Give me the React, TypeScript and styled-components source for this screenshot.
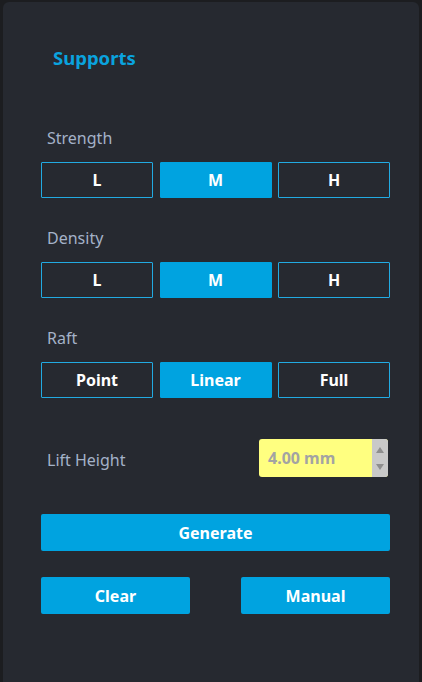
import styled, { createGlobalStyle } from 'styled-components';

const GlobalStyle = createGlobalStyle`
  html, body {
    margin: 0;
    padding: 0;
    background: #1c1d20;
    height: 100%;
    overflow: hidden;
  }
  body {
    font-family: "Noto Sans", "Open Sans", sans-serif;
  }
`;

const Panel = styled.div`
  margin: 2px 3px 0 3px;
  height: 700px;
  box-sizing: border-box;
  background: #262930;
  border-radius: 6px 6px 0 0;
  padding: 42px 29px 0 38px;
  display: flex;
  flex-direction: column;
`;

const Title = styled.h2`
  margin: 0 0 55px 12px;
  font-size: 18.5px;
  line-height: 28px;
  font-weight: 700;
  color: #0aa3de;
`;

const Section = styled.div<{ $last?: boolean }>`
  display: flex;
  flex-direction: column;
  margin-bottom: ${(p) => (p.$last ? '0' : '29px')};
`;

const Label = styled.div`
  margin-left: 6px;
  font-size: 16px;
  line-height: 22px;
  color: #a4b2c8;
  margin-bottom: 13px;
`;

const ButtonRow = styled.div`
  display: grid;
  grid-template-columns: 112px 112px 112px;
  justify-content: space-between;
`;

const Choice = styled.button<{ $active?: boolean }>`
  height: 36px;
  box-sizing: border-box;
  border: 1px solid ${(p) => (p.$active ? '#00a3e0' : '#22aae2')};
  border-radius: 1px;
  background: ${(p) => (p.$active ? '#00a3e0' : '#262930')};
  color: #ffffff;
  font-family: inherit;
  font-size: 16px;
  font-weight: 700;
  padding: 0;
`;

const FieldRow = styled.div`
  display: flex;
  align-items: center;
  justify-content: space-between;
  margin-top: 41px;
  margin-bottom: 37px;
`;

const FieldLabel = styled(Label)`
  margin-bottom: 0;
  margin-top: 4px;
`;

const Spin = styled.div`
  display: flex;
  width: 129px;
  height: 38px;
  margin-right: 2px;
  border-radius: 3px;
  overflow: hidden;
  background: #ffff80;
`;

const SpinInput = styled.div`
  flex: 1;
  display: flex;
  align-items: center;
  padding-left: 9px;
  font-size: 16px;
  font-weight: 700;
  color: #a3a3a3;
`;

const SpinArrows = styled.div`
  width: 16px;
  background: #c9c9c9;
  display: flex;
  flex-direction: column;
  align-items: center;
  justify-content: space-around;
  padding: 2px 0;
  box-sizing: border-box;
`;

const Action = styled.button<{ $wide?: boolean }>`
  height: 37px;
  width: ${(p) => (p.$wide ? '349px' : '149px')};
  box-sizing: border-box;
  border: none;
  border-radius: 2px;
  background: #00a3e0;
  color: #ffffff;
  font-family: inherit;
  font-size: 16px;
  font-weight: 700;
  padding: 0;
`;

const ActionRow = styled.div`
  display: flex;
  justify-content: space-between;
  width: 349px;
  margin-top: 26px;
`;

const Arrow = ({ up }: { up?: boolean }) => (
  <svg width="10" height="8" viewBox="0 0 10 8">
    <path d={up ? 'M5 1 L9 7 L1 7 Z' : 'M1 1 L9 1 L5 7 Z'} fill="#8e8e8e" />
  </svg>
);

const groups = [
  { label: 'Strength', options: ['L', 'M', 'H'], active: 1 },
  { label: 'Density', options: ['L', 'M', 'H'], active: 1 },
  { label: 'Raft', options: ['Point', 'Linear', 'Full'], active: 1 },
];

export default function App() {
  return (
    <>
      <GlobalStyle />
      <Panel>
        <Title>Supports</Title>
        {groups.map((g, gi) => (
          <Section key={g.label} $last={gi === groups.length - 1}>
            <Label>{g.label}</Label>
            <ButtonRow>
              {g.options.map((o, i) => (
                <Choice key={o} $active={i === g.active}>
                  {o}
                </Choice>
              ))}
            </ButtonRow>
          </Section>
        ))}
        <FieldRow>
          <FieldLabel>Lift Height</FieldLabel>
          <Spin>
            <SpinInput>4.00 mm</SpinInput>
            <SpinArrows>
              <Arrow up />
              <Arrow />
            </SpinArrows>
          </Spin>
        </FieldRow>
        <Action $wide>Generate</Action>
        <ActionRow>
          <Action>Clear</Action>
          <Action>Manual</Action>
        </ActionRow>
      </Panel>
    </>
  );
}
